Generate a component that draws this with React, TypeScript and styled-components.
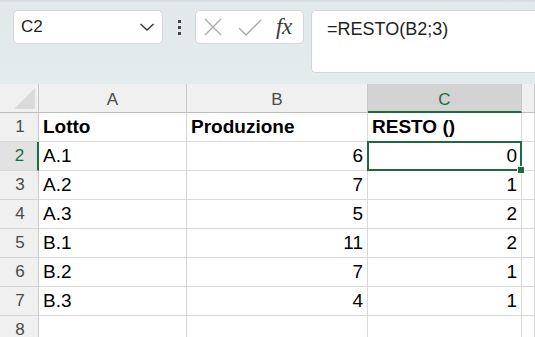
import React from "react";
import styled, { createGlobalStyle } from "styled-components";

const Global = createGlobalStyle`
  html, body { margin: 0; padding: 0; background: #ffffff; overflow: hidden; }
  body { font-family: "Liberation Sans", Arial, sans-serif; }
`;

const Page = styled.div`
  width: 535px;
  height: 337px;
  overflow: hidden;
  display: flex;
  flex-direction: column;
`;

const Toolbar = styled.div`
  height: 84px;
  flex: none;
  box-sizing: border-box;
  background: linear-gradient(#d3dadc 0px, #e2e9ea 3px, #e4ebec 100%);
  padding: 10px 0 0 13px;
  display: flex;
  align-items: flex-start;
`;

const NameBox = styled.div`
  width: 150px;
  height: 34px;
  box-sizing: border-box;
  background: #fff;
  border: 1px solid #d3d7d9;
  border-radius: 5px;
  display: flex;
  align-items: center;
  justify-content: space-between;
  padding: 0 7px 0 7px;
  font-size: 17px;
  color: #1f1f1f;
`;

const Dots = styled.div`
  width: 32px;
  height: 34px;
  display: flex;
  flex-direction: column;
  align-items: center;
  justify-content: center;
  gap: 3px;
  span {
    width: 3px;
    height: 3px;
    background: #444;
    display: block;
  }
`;

const FxBox = styled.div`
  width: 109px;
  height: 34px;
  box-sizing: border-box;
  background: #fff;
  border: 1px solid #d3d7d9;
  border-radius: 5px;
  display: flex;
  align-items: center;
  padding: 0 0 0 8px;
  gap: 16px;
`;

const FxText = styled.span`
  font-family: "Liberation Serif", "Times New Roman", serif;
  font-style: italic;
  font-size: 23px;
  color: #3a3a3a;
  margin-left: -2px;
  letter-spacing: -0.5px;
`;

const FormulaBox = styled.div`
  margin-left: 7px;
  flex: 1;
  height: 63px;
  box-sizing: border-box;
  background: #fff;
  border: 1px solid #d3d7d9;
  border-right: none;
  border-radius: 5px 0 0 5px;
  padding: 8px 0 0 15px;
  font-size: 18px;
  color: #1f1f1f;
`;

const Grid = styled.div`
  display: grid;
  grid-template-columns: 39px 148px 181px 154px 1fr;
  grid-auto-rows: 29px;
  background: #fff;
`;

const Corner = styled.div`
  background: #f0f0f0;
  border-bottom: 1px solid #bfbfbf;
  border-right: 1px solid #c8c8c8;
  box-sizing: border-box;
  position: relative;
  &::after {
    content: "";
    position: absolute;
    right: 3px;
    bottom: 3px;
    width: 0;
    height: 0;
    border-style: solid;
    border-width: 0 0 21px 21px;
    border-color: transparent transparent #dadada transparent;
  }
`;

const ColHead = styled.div<{ $active?: boolean }>`
  background: ${(p) => (p.$active ? "#d3d3d3" : "#f0f0f0")};
  border-right: 1px solid #c8c8c8;
  border-bottom: ${(p) => (p.$active ? "2px solid #1e6b3f" : "1px solid #bfbfbf")};
  box-sizing: border-box;
  display: flex;
  align-items: center;
  justify-content: center;
  padding-top: 4px;
  font-size: 17px;
  color: ${(p) => (p.$active ? "#1e6b3f" : "#4a4a4a")};
`;

const RowHead = styled.div<{ $active?: boolean }>`
  background: ${(p) => (p.$active ? "#e2e2e2" : "#f0f0f0")};
  border-right: ${(p) => (p.$active ? "2px solid #1e6b3f" : "1px solid #c8c8c8")};
  border-bottom: 1px solid #d4d4d4;
  box-sizing: border-box;
  display: flex;
  align-items: center;
  justify-content: center;
  padding-left: 2px;
  font-size: 17px;
  color: ${(p) => (p.$active ? "#1e6b3f" : "#4a4a4a")};
`;

const Cell = styled.div<{ $num?: boolean; $bold?: boolean; $selected?: boolean }>`
  border-right: 1px solid #d9d9d9;
  border-bottom: 1px solid #d9d9d9;
  box-sizing: border-box;
  display: flex;
  align-items: center;
  justify-content: ${(p) => (p.$num ? "flex-end" : "flex-start")};
  padding: 0 4px;
  font-size: 19px;
  font-weight: ${(p) => (p.$bold ? 700 : 400)};
  color: #000;
  position: relative;
  ${(p) =>
    p.$selected &&
    `
    &::before {
      content: "";
      position: absolute;
      left: -1px;
      top: -1px;
      right: -1px;
      bottom: -1px;
      border: 2px solid #1e6b3f;
      pointer-events: none;
    }
    &::after {
      content: "";
      position: absolute;
      right: -4px;
      bottom: -4px;
      width: 6px;
      height: 6px;
      background: #1e6b3f;
      border: 1px solid #fff;
      z-index: 2;
    }
  `}
`;

const rows: [string, string, string][] = [
  ["A.1", "6", "0"],
  ["A.2", "7", "1"],
  ["A.3", "5", "2"],
  ["B.1", "11", "2"],
  ["B.2", "7", "1"],
  ["B.3", "4", "1"],
];

export default function App() {
  return (
    <Page>
      <Global />
      <Toolbar>
        <NameBox>
          <span>C2</span>
          <svg width="16" height="10" viewBox="0 0 16 10">
            <path d="M1.5 2 L8 8 L14.5 2" fill="none" stroke="#333" strokeWidth="1.4" />
          </svg>
        </NameBox>
        <Dots>
          <span />
          <span />
          <span />
        </Dots>
        <FxBox>
          <svg width="18" height="18" viewBox="0 0 18 18">
            <path d="M1 1 L17 17 M17 1 L1 17" stroke="#a8a8a8" strokeWidth="1.3" fill="none" />
          </svg>
          <svg width="24" height="17" viewBox="0 0 24 17">
            <path d="M1 9 L8 16 L23 1" stroke="#a8a8a8" strokeWidth="1.3" fill="none" />
          </svg>
          <FxText>fx</FxText>
        </FxBox>
        <FormulaBox>=RESTO(B2;3)</FormulaBox>
      </Toolbar>
      <Grid>
        <Corner />
        <ColHead>A</ColHead>
        <ColHead>B</ColHead>
        <ColHead $active>C</ColHead>
        <ColHead />
        <RowHead>1</RowHead>
        <Cell $bold>Lotto</Cell>
        <Cell $bold>Produzione</Cell>
        <Cell $bold>RESTO ()</Cell>
        <Cell />
        {rows.map((r, i) => (
          <React.Fragment key={i}>
            <RowHead $active={i === 0}>{i + 2}</RowHead>
            <Cell>{r[0]}</Cell>
            <Cell $num>{r[1]}</Cell>
            <Cell $num $selected={i === 0}>
              {r[2]}
            </Cell>
            <Cell />
          </React.Fragment>
        ))}
        <RowHead>8</RowHead>
        <Cell />
        <Cell />
        <Cell />
        <Cell />
      </Grid>
    </Page>
  );
}
